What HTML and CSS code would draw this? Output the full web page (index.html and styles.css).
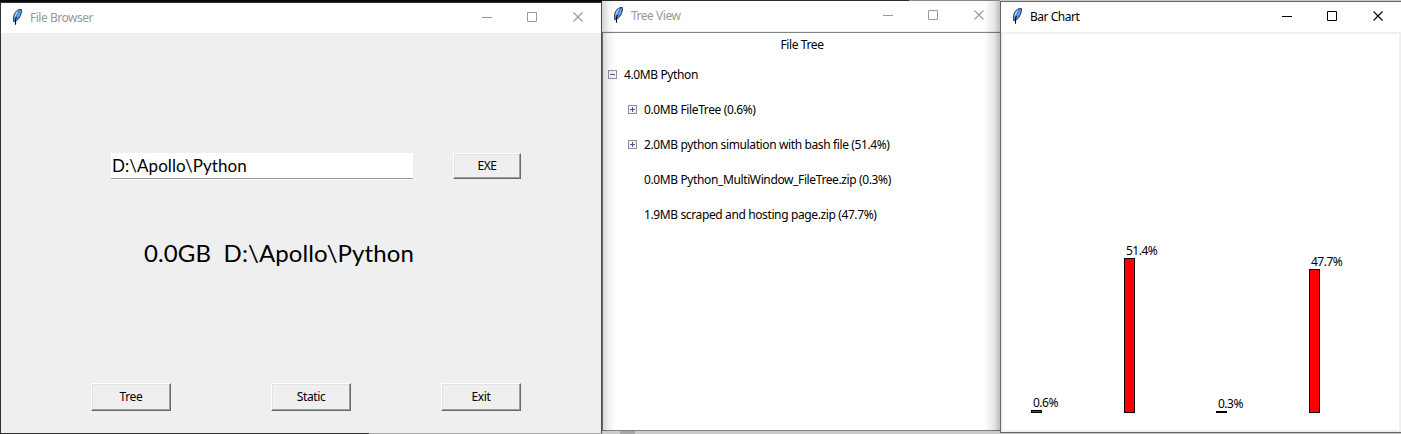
FILE: index.html
```html
<!DOCTYPE html>
<html lang="en">
<head>
<meta charset="utf-8">
<title>File Browser</title>
<link rel="stylesheet" href="styles.css">
</head>
<body>
<svg class="defs" width="0" height="0" aria-hidden="true">
  <symbol id="feather" viewBox="0 0 16 16">
    <path d="M12.500.500H10L7.500 2 5.500 4.500 4.500 7.500V12.500H6.500L9.500 10l2-3.500 1-3.500z" fill="#4c88d6"/>
    <path d="M9.500 1.500 7.500 3 6 5.500 5.200 9 7 6.500z" fill="#b5dcfa"/>
    <path d="M11.500 2 9.500 5 7.500 9.500l3-3.500z" fill="#6fa9ec"/>
    <path d="M12.500.500H10L7.500 2 5.500 4.500 4.500 7.500V12.500H6.500L9.500 10l2-3.500 1-3.500z" fill="none" stroke="#252b33" stroke-width=".8"/>
    <path d="M7.500 8 6.500 10.500V15.800" fill="none" stroke="#080c14" stroke-width="1.100"/>
  </symbol>
  <symbol id="controls" viewBox="0 0 102 12">
    <path d="M0 6.500H10" fill="none" stroke="currentColor"/>
    <path d="M45.500 1.500h9v9h-9z" fill="none" stroke="currentColor"/>
    <path d="M91.500 1.500l9 9M100.500 1.500l-9 9" fill="none" stroke="currentColor" stroke-width="1.100"/>
  </symbol>
</svg>
<main class="desktop">
  <section class="window browser">
    <header class="titlebar inactive">
      <svg class="feather"><use href="#feather"/></svg>
      <h1 class="title">File Browser</h1>
      <svg class="controls"><use href="#controls"/></svg>
    </header>
    <div class="browser-body">
      <div class="path-row">
        <div class="entry"><span>D:\Apollo\Python</span></div>
        <button class="btn exe"><span>EXE</span></button>
      </div>
      <div class="result">0.0GB&nbsp; D:\Apollo\Python</div>
      <div class="actions">
        <button class="btn"><span>Tree</span></button>
        <button class="btn"><span>Static</span></button>
        <button class="btn"><span>Exit</span></button>
      </div>
    </div>
  </section>

  <section class="window tree">
    <header class="titlebar inactive">
      <svg class="feather"><use href="#feather"/></svg>
      <h1 class="title">Tree View</h1>
      <svg class="controls"><use href="#controls"/></svg>
    </header>
    <div class="tree-body">
      <div class="tree-heading">File Tree</div>
      <ul class="rows">
        <li class="row root"><i class="toggle"></i><span>4.0MB Python</span></li>
        <li class="row"><i class="toggle plus"></i><span>0.0MB FileTree (0.6%)</span></li>
        <li class="row"><i class="toggle plus"></i><span>2.0MB python simulation with bash file (51.4%)</span></li>
        <li class="row"><i class="spacer"></i><span>0.0MB Python_MultiWindow_FileTree.zip (0.3%)</span></li>
        <li class="row"><i class="spacer"></i><span>1.9MB scraped and hosting page.zip (47.7%)</span></li>
      </ul>
    </div>
  </section>

  <section class="window chart">
    <header class="titlebar">
      <svg class="feather"><use href="#feather"/></svg>
      <h1 class="title">Bar Chart</h1>
      <svg class="controls"><use href="#controls"/></svg>
    </header>
    <div class="chart-body">
      <div class="bar-item"><span>0.6%</span><i class="bar" style="height:3px"></i></div>
      <div class="bar-item"><span>51.4%</span><i class="bar" style="height:155px"></i></div>
      <div class="bar-item"><span>0.3%</span><i class="bar" style="height:2px"></i></div>
      <div class="bar-item"><span>47.7%</span><i class="bar" style="height:144px"></i></div>
    </div>
  </section>
</main>
</body>
</html>
```
FILE: styles.css
```css
* { box-sizing: border-box; }
body { margin: 0; overflow: hidden; font: 12px/16px "Noto Sans", "Open Sans", sans-serif; letter-spacing: -0.38px; color: #000; }
.defs { position: absolute; }
.desktop {
  position: relative; width: 1401px; height: 434px; overflow: hidden;
  background:
    linear-gradient(#0a0a0a, #0a0a0a) 0 0 / 602px 3px no-repeat,
    linear-gradient(#2c2a2c, #2c2a2c) 602px 0 / 307px 1px no-repeat,
    linear-gradient(#888, #888) 909px 0 / 91px 1px no-repeat,
    linear-gradient(#a6a6a6, #a6a6a6) 620px 431px / 15px 3px no-repeat,
    #cacaca;
}
.window { position: absolute; display: flex; flex-direction: column; }
.titlebar { display: flex; align-items: flex-start; height: 30px; flex: none; background: #fff; }
.inactive { color: #999; }
.feather { width: 16px; height: 16px; margin: 6px 5px 0 8px; flex: none; }
.title { margin: 7px 0 0; font-size: inherit; font-weight: 400; line-height: 16px; letter-spacing: -0.48px; flex: 1; }
.controls { width: 102px; height: 12px; margin: 8px 13px 0 0; flex: none; }

.browser { left: 0; top: 2px; width: 602px; height: 432px; border: 1px solid #333; border-right-color: #444a52; border-bottom-color: #aaa; }
.browser::after { content: ""; position: absolute; left: -1px; bottom: -1px; width: 369px; height: 1px; background: #333; }
.browser .controls { margin-right: 17px; }
.browser-body { flex: 1; display: flex; flex-direction: column; background: #efefef; padding: 120px 80px 22px 90px; }
.path-row { display: flex; justify-content: space-between; margin-left: 20px; }
.entry { width: 302px; height: 27px; background: #fff; border-bottom: 1px solid #fff; font: 17px/26px Lato, sans-serif; letter-spacing: 0.06px; padding-left: 1px; box-shadow: inset 0 -1px #999; }
.btn { width: 80px; height: 28px; padding: 0; border: 1px solid; border-color: #fff #696969 #696969 #fff; background: #efefef; box-shadow: inset -1px -1px #a0a0a0, inset 1px 1px #e3e3e3; font: inherit; letter-spacing: inherit; color: #000; text-align: center; }
.exe { width: 68px; height: 26px; }
.result { margin: 57px 0 0 53px; font: 24px/32px Lato, sans-serif; letter-spacing: 0.1px; white-space: nowrap; }
.actions { display: grid; grid-template-columns: 180px 170px 80px; margin-top: auto; }

.tree { left: 602px; top: 1px; width: 399px; height: 430px; }
.tree::after { content: ""; position: absolute; inset: 0; background: linear-gradient(90deg, #0000002b, #0000000c 7px, transparent 14px), linear-gradient(270deg, #00000048, #00000018 7px, transparent 17px); pointer-events: none; }
.tree .titlebar { height: 31px; border-bottom: 1px solid #efefef; }
.tree .controls { margin-right: 16px; }
.tree-body { flex: 1; background: #fff; border: 1px solid #7c838c; border-right: 0; }
.tree-heading { height: 24px; padding-top: 4px; text-align: center; }
.rows { list-style: none; margin: 0; padding: 0; }
.row { height: 35px; display: flex; align-items: center; padding-left: 25px; white-space: nowrap; }
.root { padding-left: 5px; }
.toggle, .spacer { width: 9px; height: 9px; margin-right: 7px; flex: none; }
.toggle { border: 1px solid #919191; background: linear-gradient(#4059a5, #4059a5) 1px 3px / 5px 1px no-repeat, #f4f4f4; }
.plus { background: linear-gradient(#4059a5, #4059a5) 1px 3px / 5px 1px no-repeat, linear-gradient(#4059a5, #4059a5) 3px 1px / 1px 5px no-repeat, #f4f4f4; }

.chart { left: 1000px; top: 1px; width: 401px; height: 432px; border: 1px solid #666; border-right: 0; }
.chart .controls { margin-right: 17px; }
.chart-body { flex: 1; display: grid; grid-template-columns: 93px 92px 93px 60px; align-items: end; border: 2px solid #efefef; background: #fff; padding: 0 0 17px 28px; }
.bar-item { display: flex; flex-direction: column; }
.bar-item span { padding-left: 2px; line-height: 14px; letter-spacing: -0.5px; }
.bar { width: 11px; background: red; border: 1px solid #000; }
```
